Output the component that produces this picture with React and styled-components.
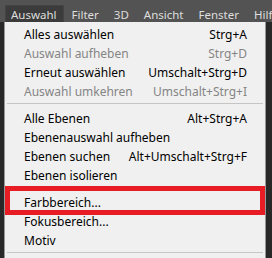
import React from "react";
import styled, { createGlobalStyle } from "styled-components";

const Global = createGlobalStyle`
  html, body { margin: 0; padding: 0; }
  body {
    background: #282828;
    font-family: "Segoe UI", "Noto Sans", sans-serif;
    overflow: hidden;
  }
`;

const Page = styled.div`
  width: 272px;
  height: 258px;
  overflow: hidden;
  display: flex;
  flex-direction: column;
`;

const MenuBar = styled.div`
  height: 22px;
  flex: none;
  background: #535353;
  display: flex;
  align-items: flex-end;
  padding-left: 5px;
  gap: 2px;
  box-sizing: border-box;
  overflow: hidden;
`;

const BarItem = styled.div`
  height: 17px;
  flex: none;
  box-sizing: border-box;
  padding: 0 6px 0 5px;
  display: flex;
  align-items: center;
  font-size: 11.5px;
  color: #dedede;
  white-space: nowrap;
  border: 1px solid ${(p) => (p.$active ? "#444" : "transparent")};
  border-bottom: none;
  background: ${(p) => (p.$active ? "#3b3b3b" : "transparent")};
`;

const Body = styled.div`
  flex: 1;
  display: flex;
  padding-left: 4px;
`;

const Panel = styled.div`
  width: 262px;
  box-sizing: border-box;
  background: #f0f0f0;
  border: 1px solid #979797;
  border-top: none;
  padding-top: 3px;
  position: relative;
`;

const Item = styled.div`
  height: 19px;
  display: flex;
  align-items: center;
  justify-content: space-between;
  padding: 0 18px 0 19px;
  font-size: 12px;
  color: ${(p) => (p.$disabled ? "#858585" : "#000")};
  white-space: nowrap;
`;

const Shortcut = styled.span`
  letter-spacing: 0;
`;

const Separator = styled.div`
  height: 8px;
  box-sizing: border-box;
  padding: 2px 2px 0;
  &::before {
    content: "";
    display: block;
    height: 1px;
    background: #c5c5c5;
  }
`;

const Highlight = styled.div`
  position: relative;
`;

const RedFrame = styled.div`
  position: absolute;
  left: 0;
  right: 0;
  top: 1px;
  height: 29px;
  box-sizing: border-box;
  border: 5px solid #e81c24;
  pointer-events: none;
`;

const bar = ["Auswahl", "Filter", "3D", "Ansicht", "Fenster", "Hilfe"];

const groups = [
  [
    ["Alles auswählen", "Strg+A"],
    ["Auswahl aufheben", "Strg+D", true],
    ["Erneut auswählen", "Umschalt+Strg+D"],
    ["Auswahl umkehren", "Umschalt+Strg+I", true],
  ],
  [
    ["Alle Ebenen", "Alt+Strg+A"],
    ["Ebenenauswahl aufheben", ""],
    ["Ebenen suchen", "Alt+Umschalt+Strg+F"],
    ["Ebenen isolieren", ""],
  ],
];

export default function App() {
  return (
    <Page>
      <Global />
      <MenuBar>
        {bar.map((b, i) => (
          <BarItem key={b} $active={i === 0}>
            {b}
          </BarItem>
        ))}
      </MenuBar>
      <Body>
        <Panel>
          {groups.map((g, gi) => (
            <React.Fragment key={gi}>
              {gi > 0 && <Separator />}
              {g.map(([label, sc, dis]) => (
                <Item key={label} $disabled={dis}>
                  <span>{label}</span>
                  <Shortcut>{sc}</Shortcut>
                </Item>
              ))}
            </React.Fragment>
          ))}
          <Highlight>
            <Separator />
            <Item>
              <span>Farbbereich...</span>
            </Item>
            <RedFrame />
          </Highlight>
          <Item>
            <span>Fokusbereich...</span>
          </Item>
          <Item>
            <span>Motiv</span>
          </Item>
          <Separator />
        </Panel>
      </Body>
    </Page>
  );
}
